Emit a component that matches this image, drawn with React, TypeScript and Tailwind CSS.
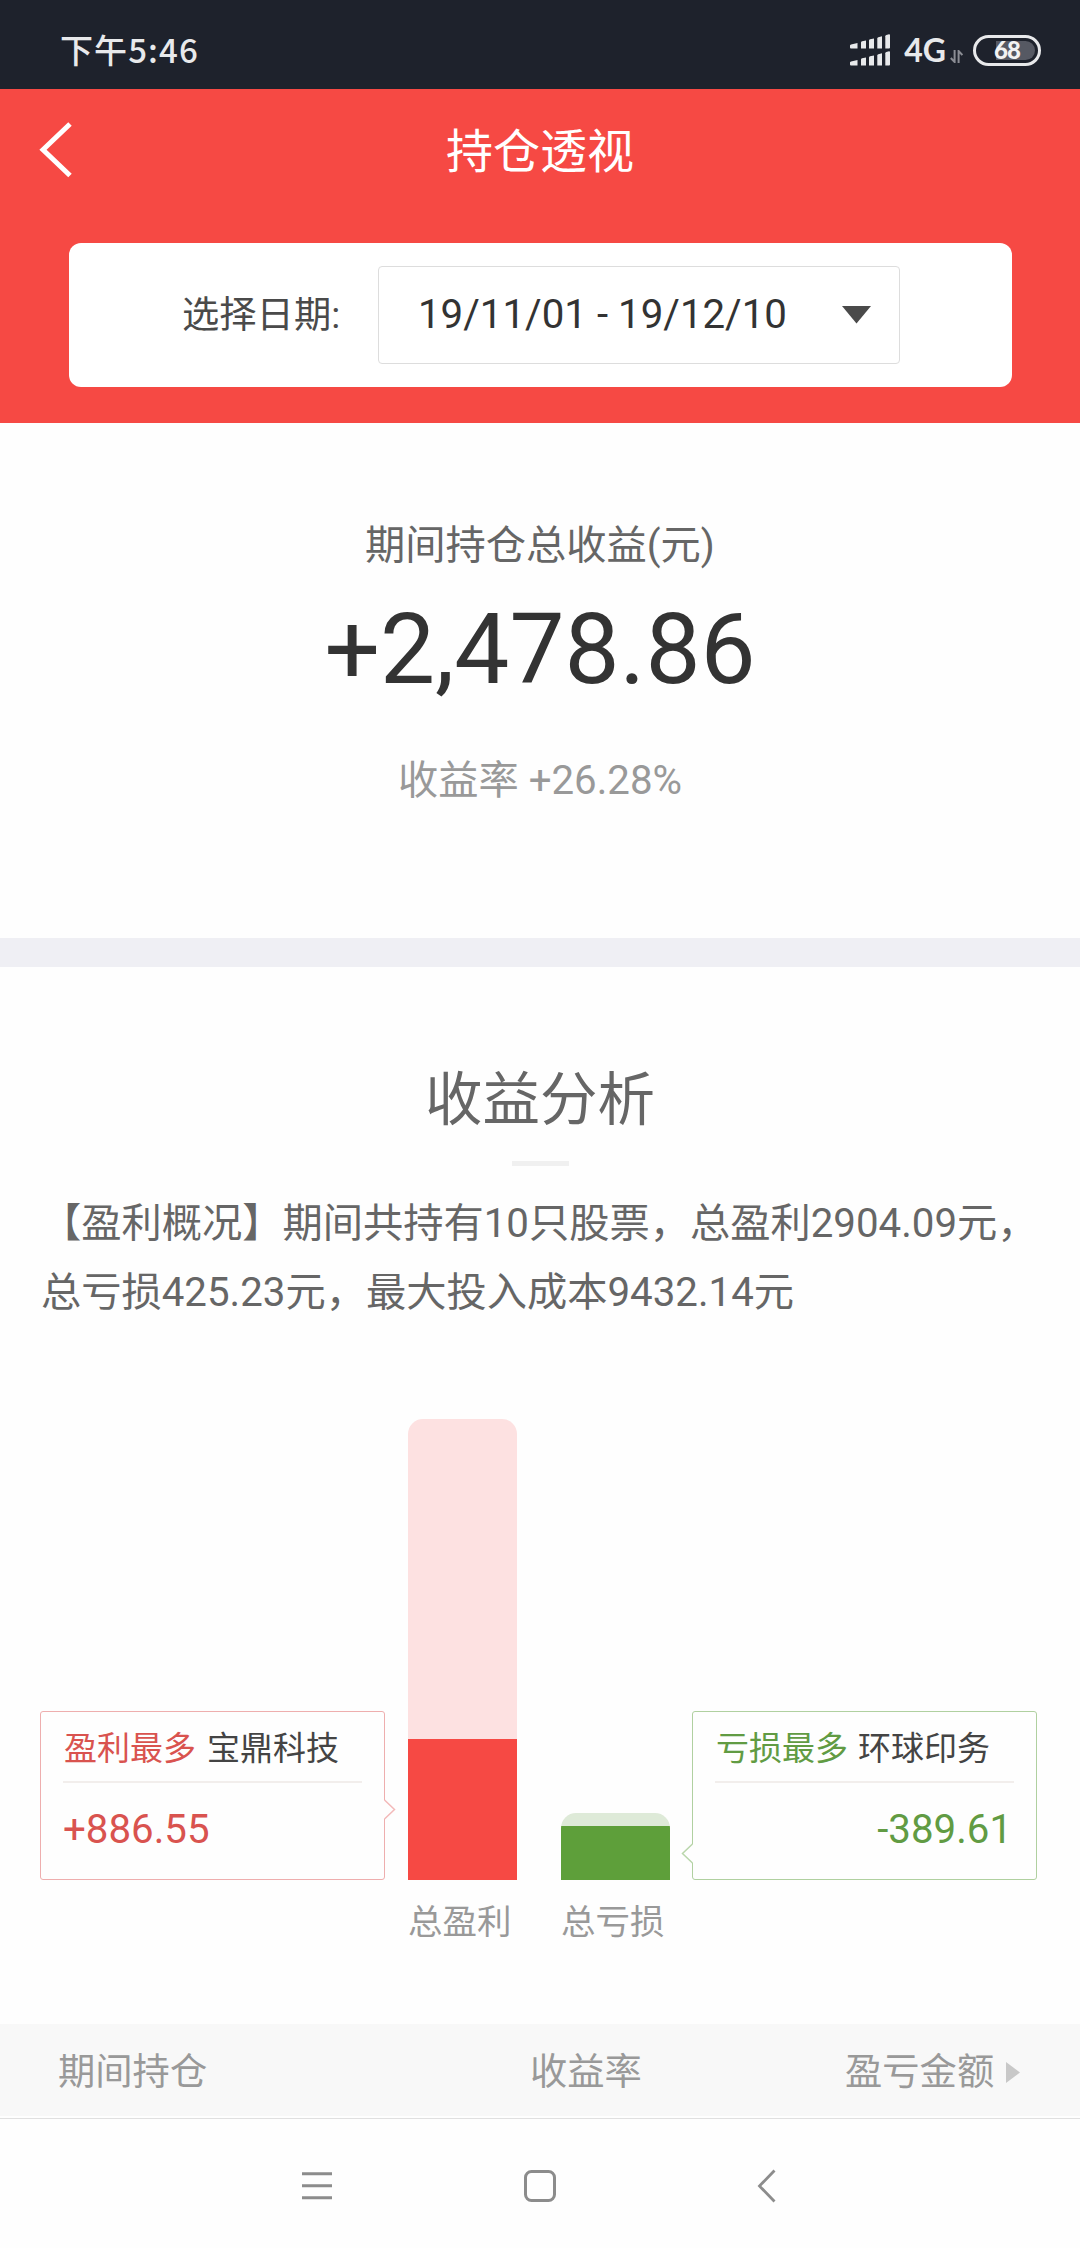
interface StockCardProps {
  label: string;
  name: string;
  amount: string;
  kind: "profit" | "loss";
}

const HEADERS = { holding: "期间持仓", rate: "收益率", amount: "盈亏金额" };

function SignalIcon() {
  return (
    <svg width="40" height="32" viewBox="0 0 40 32" fill="#e8e9eb">
      {[0, 17].map((y) => (
        <g key={y} transform={`translate(0 ${y})`}>
          <path d="M0 11.6 Q0 10.6 1 10.4 L7.5 9 V14.5 H1 Q0 14.5 0 13.5Z" />
          <path d="M11 8.5 Q11 7.5 12 7.3 L16 6.4 V14.5 H11Z" />
          <path d="M19 6.5 Q19 5.5 20 5.3 L24 4.4 V14.5 H19Z" />
          <path d="M27.3 4.5 Q27.3 3.5 28.3 3.2 L32 2.3 V14.5 H27.3Z" />
          <path d="M35.3 2.3 Q35.3 1.3 36.3 1 L39 .3 Q40 .2 40 1.2 V13.5 Q40 14.5 39 14.5 H35.3Z" />
        </g>
      ))}
    </svg>
  );
}

function Battery() {
  return (
    <div className="relative ml-[10px] flex h-[31px] w-[68px] items-center justify-center rounded-full border-[3px] border-[#e8e9eb]">
      <span className="absolute right-[3px] top-[3px] h-[19px] w-[39px] rounded-r-full bg-[#565963]" />
      <span className="relative font-['Lato',sans-serif] text-[24px] font-black leading-none tracking-[-1px] text-[#f2f2f2]">
        68
      </span>
    </div>
  );
}

function StatusBar() {
  return (
    <div className="flex h-[89px] items-center justify-between bg-[#1e222c] pl-[60px] pr-[39px] pt-[11px] text-[#e8e9eb]">
      <span className="-mt-[2px] font-['Noto_Sans_CJK_SC',sans-serif] text-[33px] font-medium leading-[50px] tracking-[1.1px]">
        下午5:46
      </span>
      <div className="flex items-center">
        <SignalIcon />
        <span className="ml-[14px] font-['Lato',sans-serif] text-[32px] font-bold leading-[50px]">4G</span>
        <svg className="ml-[4px] mt-[13px]" width="13" height="13" viewBox="0 0 13 13" fill="none" stroke="#8b8d94" strokeWidth="2">
          <path d="M4.6 0V12L0.8 8M8.6 13V1L12.4 5" />
        </svg>
        <Battery />
      </div>
    </div>
  );
}

function StockCard({ label, name, amount, kind }: StockCardProps) {
  const profit = kind === "profit";
  return (
    <div
      className={`relative h-[169px] w-[345px] rounded-[3px] border-[1.5px] px-[22px] ${
        profit ? "border-[#eeaeae]" : "border-[#b0d0a0]"
      }`}
    >
      <div className="flex h-[71px] items-center border-b-2 border-[#f2eeec] pl-px pt-[4px] text-[33px] leading-[50px]">
        <span className={profit ? "text-[#d9534f]" : "text-[#619b43]"}>{label}</span>
        <span className={`text-[#444] ${profit ? "ml-[11px]" : "ml-[10px]"}`}>{name}</span>
      </div>
      <div
        className={`text-[40.25px] leading-[94px] ${
          profit ? "text-left text-[#d9534f]" : "pr-[2px] text-right text-[#619b43]"
        }`}
      >
        {amount}
      </div>
      {/* Pointer towards the bar */}
      {profit ? (
        <svg className="absolute -right-[12px] top-[87px]" width="13" height="21" viewBox="0 0 13 21">
          <path d="M0 1H1.5L11.5 10.5L1.5 20H0Z" fill="#fefefe" />
          <path d="M1.5 1L11.5 10.5L1.5 20" fill="none" stroke="#f3b9b9" strokeWidth="1.5" />
        </svg>
      ) : (
        <svg className="absolute -left-[12px] top-[131px]" width="13" height="21" viewBox="0 0 13 21">
          <path d="M13 1H11.5L1.5 10.5L11.5 20H13Z" fill="#fefefe" />
          <path d="M11.5 1L1.5 10.5L11.5 20" fill="none" stroke="#b9d6ab" strokeWidth="1.5" />
        </svg>
      )}
    </div>
  );
}

export default function App() {
  return (
    <main className="flex h-[2248px] w-[1080px] flex-col overflow-hidden bg-[#fefefe] font-['Roboto','Noto_Sans_CJK_SC',sans-serif]">
      <StatusBar />

      {/* Header */}
      <header className="h-[334px] bg-[#f64944] px-[69px]">
        <div className="relative flex h-[126px] items-center justify-center">
          <svg className="absolute -left-[31px] top-[32px]" width="38" height="58" viewBox="0 0 38 58" fill="none">
            <path d="M32 3L5 28.7L32 54.5" stroke="#fff" strokeWidth="5" />
          </svg>
          <h1 className="text-[47px] leading-[60px] text-white">持仓透视</h1>
        </div>
        <div className="mt-[28px] flex h-[144px] w-[943px] items-center rounded-[12px] bg-white pl-[113px]">
          <span className="w-[196px] text-[37.3px] leading-[60px] text-[#4a4a4a]">选择日期:</span>
          <button className="flex h-[98px] w-[522px] items-center justify-between rounded-[4px] border-[1.5px] border-[#ddd] pl-[39px] pr-[28px] text-[40.25px] leading-[60px] text-[#333]">
            19/11/01 - 19/12/10
            <svg width="29" height="18" viewBox="0 0 29 18">
              <path d="M0 0H29L14.5 17.5Z" fill="#4a4a4a" />
            </svg>
          </button>
        </div>
      </header>

      {/* Total return */}
      <section className="flex h-[515px] flex-col items-center pt-[93px]">
        <div className="text-[40.25px] leading-[60px] text-[#666]">期间持仓总收益(元)</div>
        <div className="mt-[24px] text-[98px] leading-[100px] text-[#333]">+2,478.86</div>
        <div className="mt-[51px] text-[40.25px] leading-[60px] text-[#999]">收益率 +26.28%</div>
      </section>

      <div className="h-[29px] bg-[#efeff4]" />

      {/* Analysis */}
      <section className="h-[1057px] pt-[94px]">
        <h2 className="text-center text-[57.5px] leading-[80px] text-[#666]">收益分析</h2>
        <div className="mx-auto mt-[20px] h-[5px] w-[57px] bg-[#f0f0f0]" />
        <p className="mt-[23px] whitespace-nowrap pl-[41px] text-[40.25px] leading-[69px] text-[#666]">
          【盈利概况】期间共持有10只股票，总盈利2904.09元，
          <br />
          总亏损425.23元，最大投入成本9432.14元
        </p>

        <div className="mt-[92px] flex h-[461px] items-end pl-[40px]">
          <StockCard label="盈利最多" name="宝鼎科技" amount="+886.55" kind="profit" />
          <div className="ml-[23px] h-[461px] w-[109px] overflow-hidden rounded-t-[15px] bg-[#fde1e1] pt-[320px]">
            <div className="h-[141px] bg-[#f64944]" />
          </div>
          <div className="ml-[44px] h-[67px] w-[109px] overflow-hidden rounded-t-[15px] bg-[#deead8] pt-[13px]">
            <div className="h-[54px] bg-[#5e9f3a]" />
          </div>
          <div className="ml-[22px]">
            <StockCard label="亏损最多" name="环球印务" amount="-389.61" kind="loss" />
          </div>
        </div>
        <div className="mt-[17px] flex pl-[408px] text-[34.5px] leading-[50px] text-[#999]">
          <span className="w-[153px]">总盈利</span>
          <span>总亏损</span>
        </div>
      </section>

      {/* Table header */}
      <div className="flex h-[92px] items-center bg-[#f8f8f8] pl-[58px] pt-[4px] text-[37.3px] leading-[60px] text-[#999]">
        <span className="w-[472px]">{HEADERS.holding}</span>
        <span className="w-[315px]">{HEADERS.rate}</span>
        <span>{HEADERS.amount}</span>
        <svg className="ml-[12px]" width="14" height="21" viewBox="0 0 14 21">
          <path d="M0 0L14 10.5L0 21Z" fill="#c8c8c8" />
        </svg>
      </div>

      {/* Navigation bar */}
      <nav className="mt-[2px] flex h-[130px] items-center border-t border-[#e0e0e0] pl-[302px] pt-[5px]">
        <svg width="30" height="34" viewBox="0 0 30 34" stroke="#8c8c8c" strokeWidth="3">
          <path d="M0 4.7H30M0 16.7H30M0 28.7H30" />
        </svg>
        <svg className="ml-[192px]" width="32" height="34" viewBox="0 0 32 34" fill="none" stroke="#8c8c8c" strokeWidth="3">
          <rect x="1.5" y="2.5" width="29" height="29" rx="6" />
        </svg>
        <svg className="ml-[201px]" width="20" height="34" viewBox="0 0 20 34" fill="none" stroke="#8c8c8c" strokeWidth="2.8">
          <path d="M17.5 1.5L2.5 17L17.5 32.5" />
        </svg>
      </nav>
    </main>
  );
}
